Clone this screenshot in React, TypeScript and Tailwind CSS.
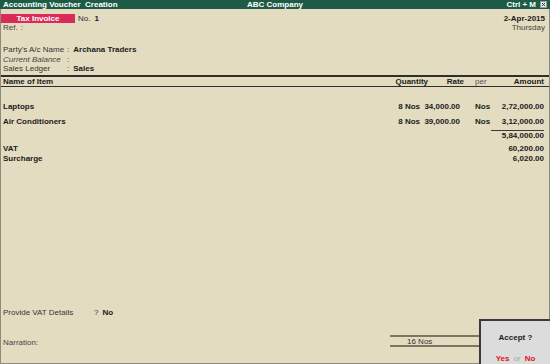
import React from 'react';

const items = [
  { name: 'Laptops', qty: '8 Nos', rate: '34,000.00', per: 'Nos', amount: '2,72,000.00', gap: 'mt-[14px]' },
  { name: 'Air Conditioners', qty: '8 Nos', rate: '39,000.00', per: 'Nos', amount: '3,12,000.00', gap: 'mt-[5px]' },
];

function CloseBox() {
  return (
    <svg width="7" height="7" viewBox="0 0 7 7" className="block">
      <rect x="0.5" y="0.5" width="6" height="6" fill="#e8e8e8" stroke="#9a9a9a" />
      <path d="M2 2 L5 5 M5 2 L2 5" stroke="#3a3a3a" strokeWidth="1" />
    </svg>
  );
}

export default function App() {
  return (
    <div
      className="relative w-[550px] h-[364px] overflow-hidden bg-[#e4dcc1] text-[8px] leading-[9px] text-[#1b1b1b] flex flex-col"
      style={{ fontFamily: '"Liberation Sans", Arial, sans-serif' }}
    >
      {/* Title bar */}
      <div className="h-[9px] bg-[#1d5b47] text-white font-bold grid grid-cols-[1fr_auto_1fr] items-center px-[3px]">
        <span className="whitespace-pre">Accounting Voucher  Creation</span>
        <span>ABC Company</span>
        <div className="flex items-center justify-end gap-[4px]">
          <span>Ctrl + M</span>
          <CloseBox />
        </div>
      </div>

      {/* Body */}
      <div className="flex-1 flex flex-col border-l border-r border-b border-[#8e8a80]">
        {/* Voucher header */}
        <div className="mt-[5px] h-[9px] flex items-center">
          <div className="w-[74px] h-[9px] bg-[#d92b57] text-white font-bold flex items-center justify-center">
            Tax Invoice
          </div>
          <span className="ml-[3px] text-[#333]">No.</span>
          <span className="ml-[4px] font-bold">1</span>
          <span className="ml-auto mr-[4px] font-bold">2-Apr-2015</span>
        </div>
        <div className="h-[9px] flex items-center pl-[2px] text-[#444]">
          <span>Ref.</span>
          <span className="ml-[3px]">:</span>
          <span className="ml-auto mr-[4px]">Thursday</span>
        </div>

        <div className="mt-[12px] pl-[2px]">
          <div className="h-[10px] flex items-center">
            <span className="w-[64px] text-[#333]">Party's A/c Name</span>
            <span className="text-[#333]">:</span>
            <span className="ml-[4px] font-bold">Archana Traders</span>
          </div>
          <div className="h-[10px] flex items-center">
            <span className="w-[64px] italic text-[#444]">Current Balance</span>
            <span className="text-[#333]">:</span>
          </div>
          <div className="h-[9px] flex items-center">
            <span className="w-[64px] text-[#333]">Sales Ledger</span>
            <span className="text-[#333]">:</span>
            <span className="ml-[4px] font-bold">Sales</span>
          </div>
        </div>

        {/* Column header */}
        <div className="mt-[2px] border-t-2 border-b border-[#2e2e2e] h-[12px] flex items-center font-bold pl-[2px] pr-[5px]">
          <span className="flex-1">Name of Item</span>
          <span className="w-[60px] text-right">Quantity</span>
          <span className="w-[36px] text-right">Rate</span>
          <span className="w-[22px] pl-[11px] font-normal text-[#555]">per</span>
          <span className="w-[58px] text-right">Amount</span>
        </div>

        {/* Items */}
        {items.map((it) => (
          <div key={it.name} className={`${it.gap} h-[10px] flex items-center font-bold pl-[2px] pr-[5px]`}>
            <span className="flex-1">{it.name}</span>
            <span className="w-[52px] text-right whitespace-nowrap">{it.qty}</span>
            <span className="w-[49px] pr-[9px] text-right whitespace-nowrap">{it.rate}</span>
            <span className="w-[17px] pl-[6px]">{it.per}</span>
            <span className="w-[58px] text-right">{it.amount}</span>
          </div>
        ))}

        <div className="mt-[4px] flex justify-end pr-[5px]">
          <div className="w-[53px] border-t border-[#3a3a3a] h-[9px] flex items-center justify-end font-bold">
            5,84,000.00
          </div>
        </div>

        <div className="mt-[4px] h-[10px] flex items-center font-bold pl-[2px] pr-[5px]">
          <span className="flex-1">VAT</span>
          <span>60,200.00</span>
        </div>
        <div className="h-[10px] flex items-center font-bold pl-[2px] pr-[5px]">
          <span className="flex-1">Surcharge</span>
          <span>6,020.00</span>
        </div>

        <div className="flex-1" />

        {/* Footer */}
        <div className="h-[10px] flex items-center pl-[2px]">
          <span className="w-[91px] text-[#333]">Provide VAT Details</span>
          <span className="text-[#333]">?</span>
          <span className="ml-[4px] font-bold">No</span>
        </div>
        <div className="mt-[18px] mb-[16px] flex items-start">
          <span className="pl-[2px] mt-[3px] text-[#444]">Narration:</span>
          <div className="ml-auto mr-[70px] w-[89px] border-t-2 border-b-2 border-[#7d7662] h-[12px] flex items-center pl-[17px] text-[#333]">
            16 Nos
          </div>
        </div>
      </div>

      {/* Accept dialog */}
      <div className="absolute right-0 bottom-0 w-[71px] h-[45px] bg-[#dcdcdc] border-t-2 border-l-2 border-[#3a3a3a] flex flex-col items-center">
        <span className="mt-[12px] font-bold">Accept ?</span>
        <div className="mt-[12px] flex items-center gap-[4px] font-bold">
          <span className="text-[#e3131b]">Yes</span>
          <span className="font-normal text-[#a8a8a8]">or</span>
          <span className="text-[#e3131b]">No</span>
        </div>
      </div>
    </div>
  );
}
